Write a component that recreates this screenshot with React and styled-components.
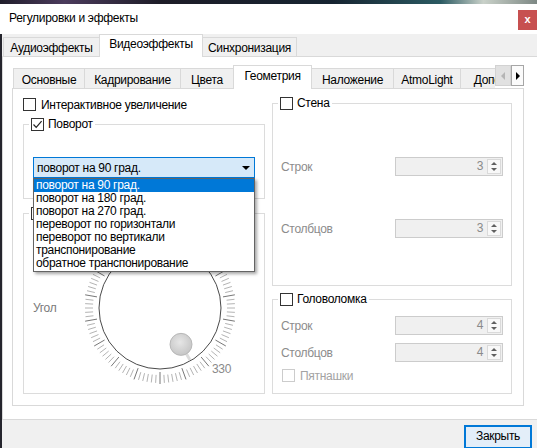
import React from "react";
import styled, { createGlobalStyle } from "styled-components";

const GlobalStyle = createGlobalStyle`
  html, body {
    margin: 0;
    padding: 0;
    background: #1b1b24;
  }
  body {
    font-family: "Liberation Sans", Arial, sans-serif;
    font-size: 12px;
    letter-spacing: -0.3px;
    color: #000;
  }
  * {
    box-sizing: border-box;
  }
`;

const Screen = styled.div`
  width: 537px;
  height: 448px;
  overflow: hidden;
  display: flex;
  flex-direction: column;
`;

const Desktop = styled.div`
  height: 4px;
  flex: none;
  background: linear-gradient(
    90deg,
    #201d2b 0%,
    #4b3b5c 12%,
    #1d1c27 30%,
    #162431 62%,
    #2b5a62 82%,
    #c9d1c9 90%,
    #7d8884 100%
  );
`;

const TitleBar = styled.div`
  height: 30px;
  flex: none;
  background: #fff;
  display: flex;
  align-items: flex-start;
  padding-left: 9px;
`;

const Title = styled.div`
  line-height: 28px;
`;

const CloseButton = styled.div`
  margin-left: auto;
  margin-top: 6px;
  width: 19px;
  height: 20px;
  background: #c75050;
  color: #fff;
  font-size: 11px;
  font-weight: bold;
  line-height: 18px;
  text-align: center;
`;

const Body = styled.div`
  flex: 1;
  background: #f0f0f0;
  border-left: 2px solid #25252d;
  display: flex;
  flex-direction: column;
`;

const TabBar = styled.div`
  height: ${(p) => p.$h}px;
  margin-bottom: -1px;
  padding-left: 1px;
  display: flex;
  align-items: flex-end;
  flex: none;
`;

const TabTrack = styled.div`
  flex: 1;
  height: 100%;
  overflow: hidden;
  display: flex;
  align-items: flex-end;
`;

const Tab = styled.div`
  flex: none;
  width: ${(p) => p.$w}px;
  height: ${(p) => (p.$active ? p.$h : p.$h - 3)}px;
  margin-left: -1px;
  border: 1px solid #d9d9d9;
  border-bottom: none;
  background: ${(p) => (p.$active ? "#fff" : "#f0f0f0")};
  position: ${(p) => (p.$active ? "relative" : "static")};
  z-index: ${(p) => (p.$active ? 1 : "auto")};
  text-align: center;
  white-space: nowrap;
  line-height: ${(p) => (p.$active ? p.$h - 4 : p.$h - 2)}px;
  &:first-child {
    margin-left: 0;
  }
`;

const Scroller = styled.div`
  align-self: flex-start;
  display: flex;
  height: 21px;
  flex: none;
`;

const ScrollButton = styled.div`
  width: ${(p) => p.$w}px;
  height: 21px;
  display: flex;
  align-items: center;
  justify-content: center;
  background: ${(p) => (p.$enabled ? "#fbfbfb" : "#e1e1e1")};
  border: 1px solid ${(p) => (p.$enabled ? "#a6a6a6" : "#d2d2d2")};
`;

const OuterPane = styled.div`
  height: 364px;
  flex: none;
  background: #fff;
  border: 1px solid #d9d9d9;
  border-right: none;
  padding: 8px 13px 13px 9px;
  display: flex;
  flex-direction: column;
`;

const InnerPane = styled.div`
  flex: 1;
  background: #fff;
  border: 1px solid #d9d9d9;
  padding: 8px 10px 11px 10px;
  display: flex;
`;

const Columns = styled.div`
  flex: 1;
  display: grid;
  grid-template-columns: 242px 240px;
  column-gap: 7px;
`;

const Column = styled.div`
  display: flex;
  flex-direction: column;
  min-height: 0;
`;

const CheckRow = styled.label`
  height: 15px;
  display: flex;
  align-items: center;
  gap: ${(p) => p.$gap || 5}px;
  margin-left: ${(p) => p.$indent || 0}px;
  margin-top: ${(p) => p.$top || 0}px;
  color: ${(p) => (p.$disabled ? "#a3a3a3" : "#000")};
  flex: none;
`;

const Box = styled.span`
  width: 13px;
  height: 13px;
  flex: none;
  border: 1px solid ${(p) => (p.$disabled ? "#cccccc" : "#333")};
  background: #fff;
  display: flex;
  align-items: center;
  justify-content: center;
`;

const Group = styled.fieldset`
  margin: ${(p) => p.$top || 0}px 0 0 0;
  padding: 0 8px ${(p) => p.$bottom || 0}px 8px;
  border: 1px solid #dcdcdc;
  min-width: 0;
  display: flex;
  flex-direction: column;
  flex: ${(p) => (p.$grow ? "1" : "none")};
  height: ${(p) => (p.$height ? `${p.$height}px` : "auto")};
`;

const Legend = styled.legend`
  padding: 0 2px;
  margin-left: -3px;
  height: 13px;
  line-height: 13px;
  display: flex;
  align-items: center;
  gap: 4px;
`;

const ComboWrap = styled.div`
  position: relative;
  margin: 26px 1px 0 1px;
`;

const Combo = styled.div`
  height: 21px;
  border: 1px solid #0078d7;
  background: #d6e9f9;
  padding-left: 3px;
  display: flex;
  align-items: center;
  justify-content: space-between;
  padding-right: 4px;
`;

const DropList = styled.div`
  position: absolute;
  top: 100%;
  left: 0;
  width: 222px;
  background: #fff;
  border: 1px solid #646464;
  box-shadow: 2px 2px 3px rgba(0, 0, 0, 0.35);
  z-index: 5;
  padding-bottom: 1px;
`;

const DropItem = styled.div`
  height: 13px;
  line-height: 13px;
  padding-left: 2px;
  white-space: nowrap;
  background: ${(p) => (p.$selected ? "#0078d7" : "transparent")};
  color: ${(p) => (p.$selected ? "#fff" : "#000")};
`;

const DialRow = styled.div`
  margin-top: 8px;
  padding-left: 1px;
  display: flex;
  align-items: center;
`;

const DialLabel = styled.div`
  width: 47px;
  flex: none;
  color: #7a7a7a;
`;

const GroupBody = styled.div`
  display: flex;
  flex-direction: column;
  gap: ${(p) => p.$gap || 0}px;
  padding-top: ${(p) => p.$pt || 0}px;
`;

const SpinRow = styled.div`
  height: 19px;
  display: flex;
  align-items: center;
  justify-content: space-between;
  color: #8c8c8c;
  flex: none;
`;

const Spin = styled.div`
  width: 108px;
  height: 19px;
  border: 1px solid #cccccc;
  background: #f0f0f0;
  display: flex;
  align-items: stretch;
`;

const SpinValue = styled.div`
  flex: 1;
  text-align: right;
  padding-right: 4px;
  line-height: 17px;
  color: #8a8a8a;
`;

const SpinArrows = styled.div`
  width: 14px;
  margin: 1px 1px 1px 0;
  border: 1px solid #dadada;
  background: #f8f8f8;
  display: flex;
  flex-direction: column;
  align-items: center;
  justify-content: space-evenly;
`;

const Footer = styled.div`
  flex: 1;
  display: flex;
  justify-content: flex-end;
  align-items: flex-start;
  padding: 5px 5px 0 0;
`;

const Button = styled.div`
  width: 68px;
  height: 24px;
  border: 1px solid #0078d7;
  box-shadow: inset 0 0 0 1px #0078d7;
  background: #e3eef9;
  text-align: center;
  line-height: 21px;
`;

const Check = ({ checked, disabled }) => (
  <Box $disabled={disabled}>
    {checked && (
      <svg width="11" height="11" viewBox="0 0 11 11">
        <path d="M1.5 5.5 L4.2 8.3 L9.6 2.2" fill="none" stroke="#222" strokeWidth="1.2" />
      </svg>
    )}
  </Box>
);

const Triangle = ({ dir, color, w = 5, h = 7 }) => (
  <svg width={w} height={h} viewBox={`0 0 ${w} ${h}`}>
    {dir === "left" && <polygon points={`${w},0 ${w},${h} 0,${h / 2}`} fill={color} />}
    {dir === "right" && <polygon points={`0,0 0,${h} ${w},${h / 2}`} fill={color} />}
    {dir === "up" && <polygon points={`0,${h} ${w},${h} ${w / 2},0`} fill={color} />}
    {dir === "down" && <polygon points={`0,0 ${w},0 ${w / 2},${h}`} fill={color} />}
  </svg>
);

const SpinBox = ({ value }) => (
  <Spin>
    <SpinValue>{value}</SpinValue>
    <SpinArrows>
      <Triangle dir="up" color="#606060" w={6} h={3} />
      <Triangle dir="down" color="#606060" w={6} h={3} />
    </SpinArrows>
  </Spin>
);

function Dial() {
  const cx = 80;
  const cy = 80;
  const ticks = [];
  for (let i = 0; i < 108; i++) {
    const a = ((i * 360) / 108) * (Math.PI / 180);
    const major = i % 6 === 0;
    const r1 = major ? 64 : 67;
    const r2 = major ? 76 : 75;
    const sx = Math.sin(a);
    const sy = Math.cos(a);
    ticks.push(
      <line
        key={i}
        x1={cx + sx * r1}
        y1={cy + sy * r1}
        x2={cx + sx * r2}
        y2={cy + sy * r2}
        stroke={major ? "#777" : "#b4b4b4"}
        strokeWidth="1"
      />
    );
  }
  const ka = (30 * Math.PI) / 180;
  const kx = cx + Math.sin(ka) * 42;
  const ky = cy + Math.cos(ka) * 42;
  return (
    <svg width="160" height="160" viewBox="0 0 160 160">
      <defs>
        <radialGradient id="knob" cx="45%" cy="40%" r="60%">
          <stop offset="0%" stopColor="#e6e6e6" />
          <stop offset="100%" stopColor="#c6c6c6" />
        </radialGradient>
      </defs>
      {ticks}
      <circle cx={cx} cy={cy} r="61" fill="#fff" stroke="#4a4a4a" strokeWidth="1" />
      <line
        x1={cx + Math.sin(ka) * 53}
        y1={cy + Math.cos(ka) * 53}
        x2={cx + Math.sin(ka) * 60}
        y2={cy + Math.cos(ka) * 60}
        stroke="#dcdcdc"
        strokeWidth="3"
      />
      <circle cx={kx} cy={ky} r="11" fill="url(#knob)" stroke="#b8b8b8" strokeWidth="1" />
      <text x="132" y="145" fontSize="12" fill="#8a8a8a" fontFamily="Liberation Sans, Arial, sans-serif">
        330
      </text>
    </svg>
  );
}

const outerTabs = [
  { label: "Аудиоэффекты", w: 97 },
  { label: "Видеоэффекты", w: 104, active: true },
  { label: "Синхронизация", w: 95 },
];

const innerTabs = [
  { label: "Основные", w: 72 },
  { label: "Кадрирование", w: 97 },
  { label: "Цвета", w: 54 },
  { label: "Геометрия", w: 79, active: true },
  { label: "Наложение", w: 83 },
  { label: "AtmoLight", w: 68 },
  { label: "Дополнительно", w: 110 },
];

const rotations = [
  "поворот на 90 град.",
  "поворот на 180 град.",
  "поворот на 270 град.",
  "переворот по горизонтали",
  "переворот по вертикали",
  "транспонирование",
  "обратное транспонирование",
];

export default function App() {
  return (
    <>
      <GlobalStyle />
      <Screen>
        <Desktop />
        <TitleBar>
          <Title>Регулировки и эффекты</Title>
          <CloseButton>x</CloseButton>
        </TitleBar>
        <Body>
          <TabBar $h={23}>
            {outerTabs.map((t) => (
              <Tab key={t.label} $w={t.w} $h={23} $active={t.active}>
                {t.label}
              </Tab>
            ))}
          </TabBar>
          <OuterPane>
            <TabBar $h={24}>
              <TabTrack>
                {innerTabs.map((t) => (
                  <Tab key={t.label} $w={t.w} $h={24} $active={t.active}>
                    {t.label}
                  </Tab>
                ))}
              </TabTrack>
              <Scroller>
                <ScrollButton $w={16}>
                  <Triangle dir="left" color="#b5b5b5" w={4} h={8} />
                </ScrollButton>
                <ScrollButton $w={13} $enabled>
                  <Triangle dir="right" color="#000" w={4} h={8} />
                </ScrollButton>
              </Scroller>
            </TabBar>
            <InnerPane>
              <Columns>
                <Column>
                  <CheckRow>
                    <Check />
                    Интерактивное увеличение
                  </CheckRow>
                  <Group $top={6} $bottom={20}>
                    <Legend>
                      <Check checked />
                      Поворот
                    </Legend>
                    <ComboWrap>
                      <Combo>
                        <span>поворот на 90 град.</span>
                        <Triangle dir="down" color="#000" w={8} h={4} />
                      </Combo>
                      <DropList>
                        {rotations.map((r, i) => (
                          <DropItem key={r} $selected={i === 0}>
                            {r}
                          </DropItem>
                        ))}
                      </DropList>
                    </ComboWrap>
                  </Group>
                  <Group $top={8} $grow>
                    <Legend>
                      <Check />
                    </Legend>
                    <DialRow>
                      <DialLabel>Угол</DialLabel>
                      <Dial />
                    </DialRow>
                  </Group>
                </Column>
                <Column>
                  <Group $height={189}>
                    <Legend>
                      <Check />
                      Стена
                    </Legend>
                    <GroupBody $pt={47} $gap={43}>
                      <SpinRow>
                        Строк
                        <SpinBox value="3" />
                      </SpinRow>
                      <SpinRow>
                        Столбцов
                        <SpinBox value="3" />
                      </SpinRow>
                    </GroupBody>
                  </Group>
                  <Group $top={7} $grow>
                    <Legend>
                      <Check />
                      Головоломка
                    </Legend>
                    <GroupBody $pt={10} $gap={8}>
                      <SpinRow>
                        Строк
                        <SpinBox value="4" />
                      </SpinRow>
                      <SpinRow>
                        Столбцов
                        <SpinBox value="4" />
                      </SpinRow>
                      <CheckRow $disabled $indent={1} $top={-2}>
                        <Check disabled />
                        Пятнашки
                      </CheckRow>
                    </GroupBody>
                  </Group>
                </Column>
              </Columns>
            </InnerPane>
          </OuterPane>
          <Footer>
            <Button>Закрыть</Button>
          </Footer>
        </Body>
      </Screen>
    </>
  );
}
